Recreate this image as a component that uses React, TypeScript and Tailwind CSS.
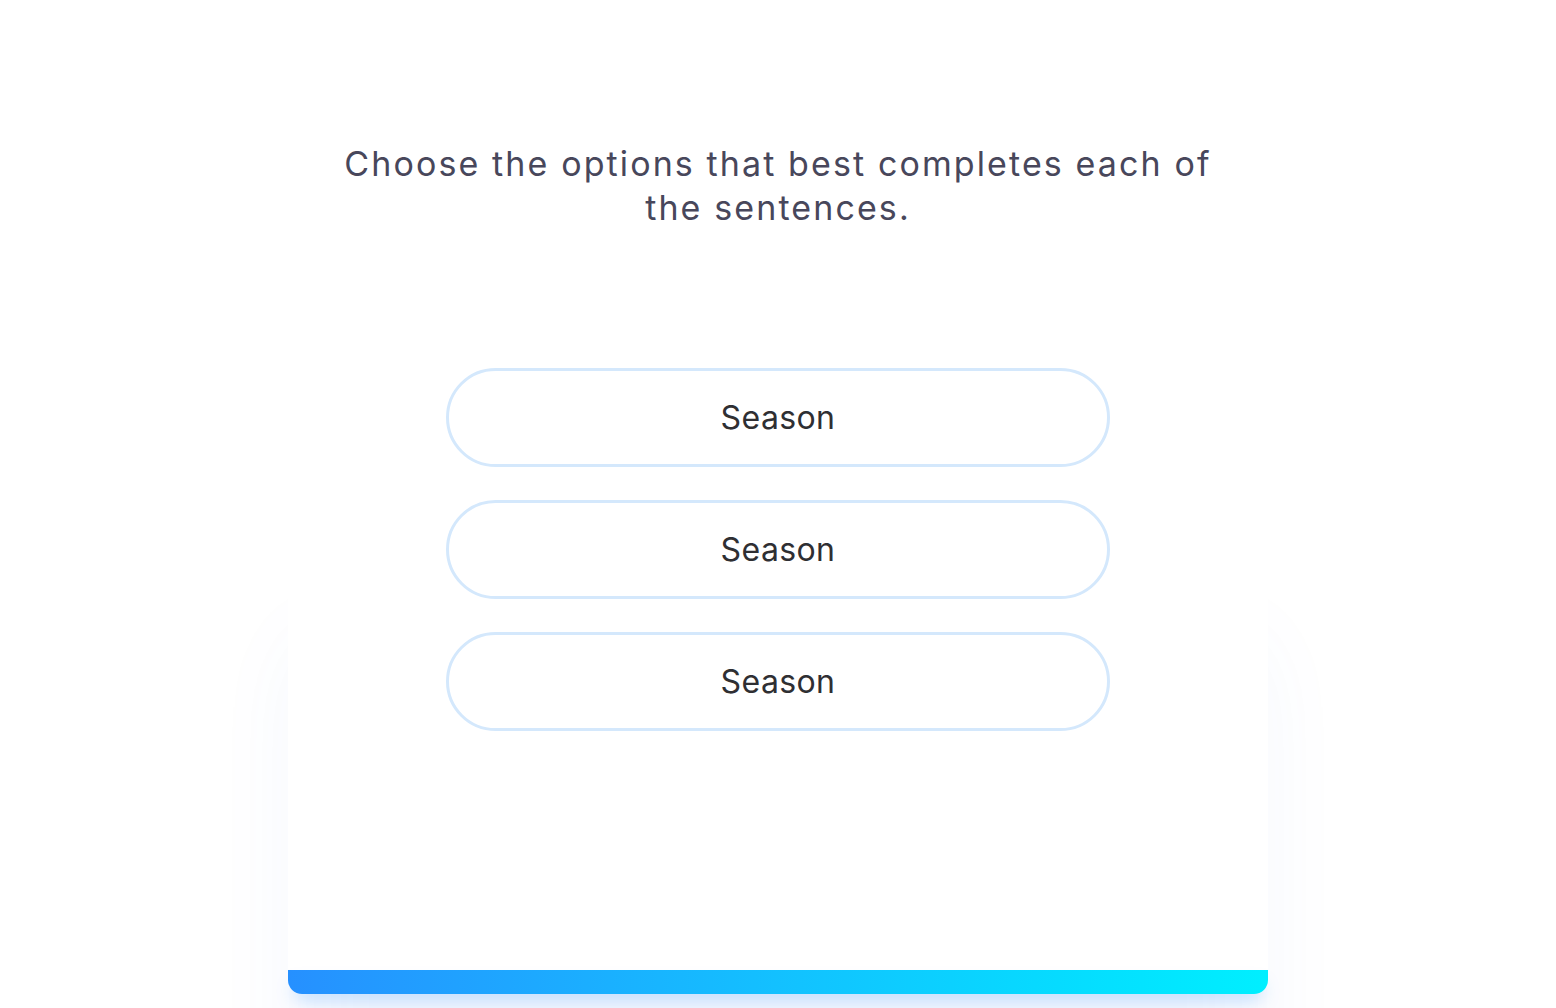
const options = ["Season", "Season", "Season"];

export default function App() {
  return (
    <div
      className="flex h-[1008px] justify-center overflow-hidden bg-white"
      style={{ fontFamily: "Inter, 'Open Sans', sans-serif" }}
    >
      <div className="flex h-[994px] w-[980px] flex-col rounded-b-[14px] bg-white shadow-[0_630px_90px_-14px_rgba(50,110,220,0.06)]">
        <div className="flex flex-1 flex-col items-center pt-[142px]">
          <h1 className="w-[900px] text-center text-[34px] leading-[44px] font-normal tracking-[0.062em] text-[#48475b]">
            Choose the options that best completes each of the sentences.
          </h1>
          <div className="mt-[138px] flex flex-col gap-[33px]">
            {options.map((label, i) => (
              <button
                key={i}
                type="button"
                className="flex h-[99px] w-[664px] items-center justify-center rounded-full border-[3px] border-[#d4e8fc] bg-white pt-px text-[32px] tracking-[0.012em] text-[#2f2f33]"
              >
                {label}
              </button>
            ))}
          </div>
        </div>
        <div className="h-[24px] rounded-b-[14px] bg-gradient-to-r from-[#2690ff] to-[#00efff] shadow-[0_10px_18px_-6px_rgba(38,144,255,0.35)]" />
      </div>
    </div>
  );
}
